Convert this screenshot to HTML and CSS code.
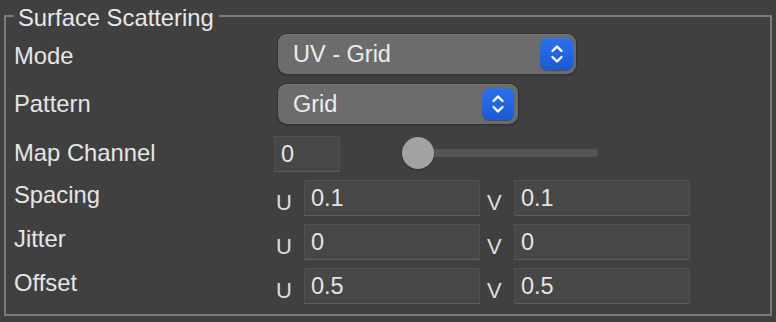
FILE: index.html
```html
<!DOCTYPE html>
<html lang="en">
<head>
    <meta charset="UTF-8">
    <title>Surface Scattering</title>
    <link rel="stylesheet" href="styles.css">
</head>
<body>
    <fieldset class="panel">
        <legend>Surface Scattering</legend>

        <div class="row row-mode">
            <label class="name">Mode</label>
            <div class="select select-wide">
                <span>UV - Grid</span>
                <span class="stepper">
                    <svg width="14" height="22" viewBox="0 0 14 22"><path d="M2.5 8 L7 3.5 L11.5 8 M2.5 14 L7 18.5 L11.5 14" fill="none" stroke="#fff" stroke-width="2.4" stroke-linecap="round" stroke-linejoin="round"/></svg>
                </span>
            </div>
        </div>

        <div class="row row-pattern">
            <label class="name">Pattern</label>
            <div class="select select-narrow">
                <span>Grid</span>
                <span class="stepper">
                    <svg width="14" height="22" viewBox="0 0 14 22"><path d="M2.5 8 L7 3.5 L11.5 8 M2.5 14 L7 18.5 L11.5 14" fill="none" stroke="#fff" stroke-width="2.4" stroke-linecap="round" stroke-linejoin="round"/></svg>
                </span>
            </div>
        </div>

        <div class="row row-channel">
            <label class="name name-channel">Map Channel</label>
            <input class="field field-short" type="text" value="0">
            <div class="slider">
                <div class="track"></div>
                <div class="knob"></div>
            </div>
        </div>

        <div class="row row-uv">
            <label class="name name-uv">Spacing</label>
            <span class="axis axis-u">U</span>
            <input class="field" type="text" value="0.1">
            <span class="axis axis-v">V</span>
            <input class="field" type="text" value="0.1">
        </div>

        <div class="row row-uv">
            <label class="name name-uv">Jitter</label>
            <span class="axis axis-u">U</span>
            <input class="field" type="text" value="0">
            <span class="axis axis-v">V</span>
            <input class="field" type="text" value="0">
        </div>

        <div class="row row-uv row-last">
            <label class="name name-uv">Offset</label>
            <span class="axis axis-u">U</span>
            <input class="field" type="text" value="0.5">
            <span class="axis axis-v">V</span>
            <input class="field" type="text" value="0.5">
        </div>
    </fieldset>
</body>
</html>
```

FILE: styles.css
```css
body {
    margin: 0;
    background-color: #404040;
    color: #e6e6e6;
    font-family: "Liberation Sans", Arial, Helvetica, sans-serif;
    font-size: 23.5px;
}
.panel {
    margin: 2px 4px 0 4px;
    padding: 4px 8px 10px 8px;
    border: 2px solid #7a7a7a;
    min-width: 0;
}
.panel legend {
    padding: 4px 5px 0 4px;
    line-height: 24px;
    font-size: 23.8px;
    color: #e8e8e8;
}
.row {
    display: flex;
    align-items: center;
    margin-bottom: 8px;
}
.row-mode {
    height: 40px;
    margin-bottom: 10px;
}
.row-pattern {
    height: 40px;
    margin-bottom: 12px;
}
.row-channel {
    height: 36px;
}
.row-uv {
    height: 36px;
}
.row-last {
    margin-bottom: 0;
}
.name {
    flex: none;
    width: 264px;
    font-size: 23.8px;
}
.row-mode .name {
    margin-top: 3px;
}
.name-channel {
    width: 260px;
    margin-bottom: 3px;
}
.name-uv {
    width: 261px;
    margin-bottom: 7px;
}
.select {
    position: relative;
    box-sizing: border-box;
    height: 40px;
    padding-left: 15px;
    display: flex;
    align-items: center;
    background-color: #6c6c6c;
    border-radius: 9px;
    box-shadow: 0 0 0 1px #323232, 0 1px 2px rgba(0,0,0,0.35), inset 0 1px 0 #757575;
    color: #ececec;
}
.select-wide {
    width: 298px;
}
.select-narrow {
    width: 240px;
}
.stepper {
    position: absolute;
    top: 3px;
    right: 3px;
    width: 33px;
    height: 33px;
    border-radius: 7px;
    background: linear-gradient(#2c72ec, #1a5ad6);
    box-shadow: 0 1px 1px rgba(0,0,0,0.3);
    display: flex;
    align-items: center;
    justify-content: center;
}
.select-narrow .stepper {
    top: 4px;
    right: 4px;
    width: 32px;
    height: 32px;
}
.field {
    box-sizing: border-box;
    width: 176px;
    height: 36px;
    margin: 0;
    padding: 0 6px;
    background-color: #474747;
    border: 1px solid #525252;
    border-bottom-color: #5e5e5e;
    border-radius: 0;
    color: #e4e4e4;
    font-family: inherit;
    font-size: 23.5px;
    outline: none;
}
.field-short {
    width: 66px;
}
.axis {
    flex: none;
    box-sizing: border-box;
    font-size: 22px;
    color: #dedede;
    margin-top: 10px;
}
.axis-u {
    width: 29px;
    padding-left: 1px;
}
.axis-v {
    width: 34px;
    padding-left: 7px;
}
.slider {
    position: relative;
    width: 196px;
    height: 32px;
    margin-left: 62px;
    margin-top: -2px;
}
.track {
    position: absolute;
    left: 10px;
    right: 0;
    top: 12px;
    height: 8px;
    border-radius: 4px;
    background-color: #555555;
}
.knob {
    position: absolute;
    left: 0;
    top: 0;
    width: 32px;
    height: 32px;
    border-radius: 50%;
    background-color: #a2a2a2;
    box-shadow: 0 1px 2px rgba(0,0,0,0.3);
}
```
